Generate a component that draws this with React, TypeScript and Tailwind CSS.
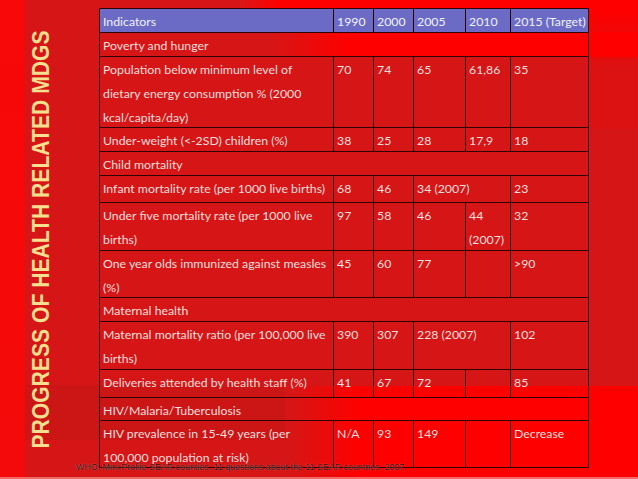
import React from "react";

type Cell = { text: React.ReactNode; span?: number };
type Row = { h: string; section?: string; cells?: Cell[]; head?: boolean };

const rows: Row[] = [
  {
    h: "h-[24px]",
    head: true,
    cells: [
      { text: "Indicators" },
      { text: "1990" },
      { text: "2000" },
      { text: "2005" },
      { text: "2010" },
      { text: "2015 (Target)" },
    ],
  },
  { h: "h-[24px]", section: "Poverty and hunger" },
  {
    h: "h-[71px]",
    cells: [
      {
        text: (
          <>
            Population below minimum level of
            <br />
            dietary energy consumption % (2000
            <br />
            kcal/capita/day)
          </>
        ),
      },
      { text: "70" },
      { text: "74" },
      { text: "65" },
      { text: "61,86" },
      { text: "35" },
    ],
  },
  {
    h: "h-[24px]",
    cells: [
      { text: "Under-weight (<-2SD) children (%)" },
      { text: "38" },
      { text: "25" },
      { text: "28" },
      { text: "17,9" },
      { text: "18" },
    ],
  },
  { h: "h-[24px]", section: "Child mortality" },
  {
    h: "h-[27px]",
    cells: [
      { text: "Infant mortality rate (per 1000 live births)" },
      { text: "68" },
      { text: "46" },
      { text: "34 (2007)", span: 2 },
      { text: "23" },
    ],
  },
  {
    h: "h-[48px]",
    cells: [
      {
        text: (
          <>
            Under five mortality rate (per 1000 live
            <br />
            births)
          </>
        ),
      },
      { text: "97" },
      { text: "58" },
      { text: "46" },
      {
        text: (
          <>
            44
            <br />
            (2007)
          </>
        ),
      },
      { text: "32" },
    ],
  },
  {
    h: "h-[47px]",
    cells: [
      {
        text: (
          <>
            One year olds immunized against measles
            <br />
            (%)
          </>
        ),
      },
      { text: "45" },
      { text: "60" },
      { text: "77" },
      { text: "" },
      { text: ">90" },
    ],
  },
  { h: "h-[24px]", section: "Maternal health" },
  {
    h: "h-[48px]",
    cells: [
      {
        text: (
          <>
            Maternal mortality ratio (per 100,000 live
            <br />
            births)
          </>
        ),
      },
      { text: "390" },
      { text: "307" },
      { text: "228 (2007)", span: 2 },
      { text: "102" },
    ],
  },
  {
    h: "h-[28px]",
    cells: [
      { text: "Deliveries attended by health staff (%)" },
      { text: "41" },
      { text: "67" },
      { text: "72" },
      { text: "" },
      { text: "85" },
    ],
  },
  { h: "h-[23px]", section: "HIV/Malaria/Tuberculosis" },
  {
    h: "h-[47px]",
    cells: [
      {
        text: (
          <>
            HIV prevalence in 15-49 years (per
            <br />
            100,000 population at risk)
          </>
        ),
      },
      { text: "N/A" },
      { text: "93" },
      { text: "149" },
      { text: "" },
      { text: "Decrease" },
    ],
  },
];

export default function App() {
  return (
    <div className="relative flex w-[638px] h-[479px] overflow-hidden [background:linear-gradient(#f06a6a,#f06a6a)_0_477px/638px_2px_no-repeat,linear-gradient(180deg,#f80808,#f40a0a)_0_0/25px_479px_no-repeat,linear-gradient(90deg,#d81818,#ff0000_40px)_240px_0/398px_9px_no-repeat,linear-gradient(90deg,rgba(255,0,0,0),#ff0000_80px)_270px_32px/368px_25px_no-repeat,linear-gradient(90deg,rgba(255,0,0,0),#ff0000_70px)_290px_386px/348px_93px_no-repeat,linear-gradient(180deg,#ff0000,#dc1212_60px)_588px_9px/50px_120px_no-repeat,linear-gradient(180deg,#cc1616,#cc1616)_25px_385px/260px_55px_no-repeat,#d61616]">
      <div className="flex w-[99px] shrink-0 items-center pl-[29px]">
        <div className="[writing-mode:vertical-rl] rotate-180 scale-y-[0.88] whitespace-nowrap text-[24px] leading-[24px] font-bold text-[#f6df8e] font-['Liberation_Sans',Arial,sans-serif]">
          PROGRESS OF HEALTH RELATED MDGS
        </div>
      </div>

      <div className="pt-[8px]">
        <div className="grid grid-cols-[234px_40px_40px_52px_45px_78px] border-l border-t border-[#2e0404] text-[12.3px] leading-[24px] text-[#f8dede] font-['Lato','Open_Sans',sans-serif]">
          {rows.map((row, i) =>
            row.section ? (
              <div
                key={i}
                className={`${row.h} col-span-6 border-r border-b border-[#2e0404] pl-[3px] pt-[1px] whitespace-nowrap`}
              >
                {row.section}
              </div>
            ) : (
              row.cells!.map((c, j) => (
                <div
                  key={`${i}-${j}`}
                  className={`${row.h} ${c.span === 2 ? "col-span-2" : ""} ${
                    row.head ? "bg-[#6b6bc6] text-[#f2f2ff]" : ""
                  } border-r border-b border-[#2e0404] pl-[3px] pt-[1px] whitespace-nowrap`}
                >
                  {c.text}
                </div>
              ))
            )
          )}
        </div>
      </div>

      <div className="absolute left-[76px] top-[462px] whitespace-nowrap text-[8.9px] leading-[10px] text-[#3a0606] [text-shadow:0_0_1px_rgba(255,210,210,0.7)] font-['Liberation_Sans',Arial,sans-serif]">
        WHO. Mini Profile SEAR counties. 11 questions about the 11 SEAR countries. 2007.
      </div>
    </div>
  );
}
